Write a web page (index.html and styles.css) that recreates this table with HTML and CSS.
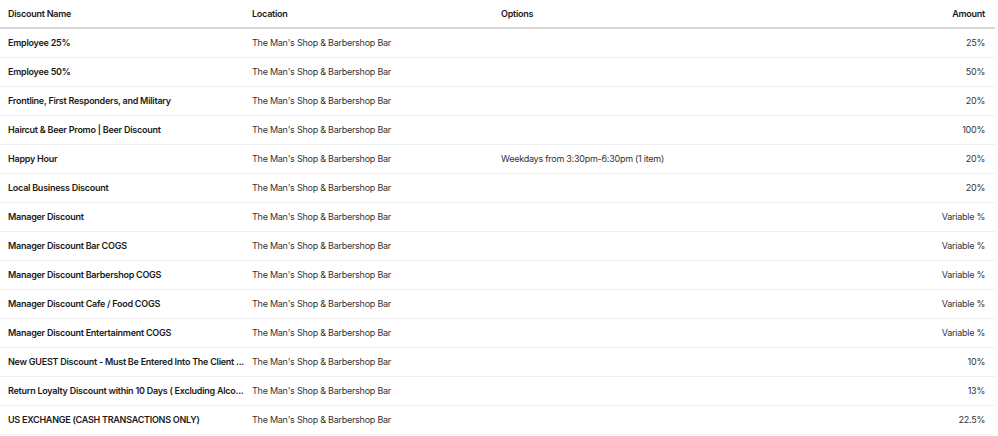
FILE: index.html
```html
<!DOCTYPE html>
<html lang="en">
<head>
  <meta charset="UTF-8" />
  <meta name="viewport" content="width=device-width, initial-scale=1.0" />
  <title>Discounts</title>
  <link rel="stylesheet" href="styles.css">
</head>
<body>
  <table class="discounts">
    <thead>
      <tr>
        <th class="col-name">Discount Name</th>
        <th class="col-location">Location</th>
        <th class="col-options">Options</th>
        <th class="col-amount">Amount</th>
      </tr>
    </thead>
    <tbody>
      <tr><td class="name">Employee 25%</td><td>The Man's Shop &amp; Barbershop Bar</td><td></td><td class="amount">25%</td></tr>
      <tr><td class="name">Employee 50%</td><td>The Man's Shop &amp; Barbershop Bar</td><td></td><td class="amount">50%</td></tr>
      <tr><td class="name">Frontline, First Responders, and Military</td><td>The Man's Shop &amp; Barbershop Bar</td><td></td><td class="amount">20%</td></tr>
      <tr><td class="name">Haircut &amp; Beer Promo | Beer Discount</td><td>The Man's Shop &amp; Barbershop Bar</td><td></td><td class="amount">100%</td></tr>
      <tr><td class="name">Happy Hour</td><td>The Man's Shop &amp; Barbershop Bar</td><td>Weekdays from 3:30pm-6:30pm (1 item)</td><td class="amount">20%</td></tr>
      <tr><td class="name">Local Business Discount</td><td>The Man's Shop &amp; Barbershop Bar</td><td></td><td class="amount">20%</td></tr>
      <tr><td class="name">Manager Discount</td><td>The Man's Shop &amp; Barbershop Bar</td><td></td><td class="amount">Variable %</td></tr>
      <tr><td class="name">Manager Discount Bar COGS</td><td>The Man's Shop &amp; Barbershop Bar</td><td></td><td class="amount">Variable %</td></tr>
      <tr><td class="name">Manager Discount Barbershop COGS</td><td>The Man's Shop &amp; Barbershop Bar</td><td></td><td class="amount">Variable %</td></tr>
      <tr><td class="name">Manager Discount Cafe / Food COGS</td><td>The Man's Shop &amp; Barbershop Bar</td><td></td><td class="amount">Variable %</td></tr>
      <tr><td class="name">Manager Discount Entertainment COGS</td><td>The Man's Shop &amp; Barbershop Bar</td><td></td><td class="amount">Variable %</td></tr>
      <tr><td class="name">New GUEST Discount - Must Be Entered Into The Client ...</td><td>The Man's Shop &amp; Barbershop Bar</td><td></td><td class="amount">10%</td></tr>
      <tr><td class="name">Return Loyalty Discount within 10 Days ( Excluding Alco...</td><td>The Man's Shop &amp; Barbershop Bar</td><td></td><td class="amount">13%</td></tr>
      <tr><td class="name">US EXCHANGE (CASH TRANSACTIONS ONLY)</td><td>The Man's Shop &amp; Barbershop Bar</td><td></td><td class="amount">22.5%</td></tr>
    </tbody>
  </table>
</body>
</html>
```

FILE: styles.css
```css
body {
  margin: 0;
  font-family: Inter, 'Noto Sans', sans-serif;
  font-size: 9px;
  letter-spacing: -0.25px;
  color: #333;
  background: #fff;
}
.discounts {
  width: 995px;
  border-collapse: collapse;
  table-layout: fixed;
}
.discounts th,
.discounts td {
  box-sizing: border-box;
  height: 29px;
  padding: 0 10px 1px 8px;
  text-align: left;
  white-space: nowrap;
  overflow: hidden;
}
.discounts th {
  font-weight: 600;
  color: #1a1a1a;
  height: 28px;
  border-bottom: 2px solid #d8d8d8;
}
.discounts td {
  border-bottom: 1px solid #f0f0f0;
}
.col-name { width: 244px; }
.col-location { width: 249px; }
.col-amount { width: 150px; }
.discounts .col-amount,
.discounts .amount {
  text-align: right;
}
.discounts .name {
  font-weight: 600;
  color: #1a1a1a;
}
```
